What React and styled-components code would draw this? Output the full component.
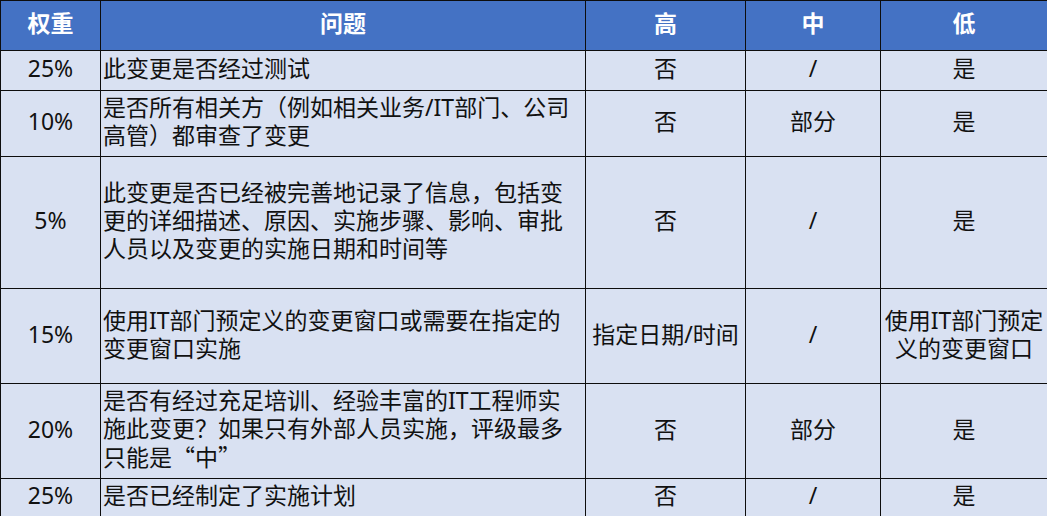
import React from "react";
import styled, { createGlobalStyle } from "styled-components";

const GlobalStyle = createGlobalStyle`
  html, body {
    margin: 0;
    padding: 0;
    background: #ffffff;
  }
  body {
    font-family: "Noto Sans", "Noto Sans CJK SC", sans-serif;
  }
`;

const Table = styled.table`
  width: 1047px;
  table-layout: fixed;
  border-collapse: collapse;
  font-family: "Noto Sans", "Noto Sans CJK SC", sans-serif;
  font-size: 23px;
  line-height: 28px;
  color: #111111;
`;

const Col = styled.col`
  width: ${(p) => p.$w}px;
`;

const HeadRow = styled.tr`
  height: 50px;
  background: #4472c4;
`;

const HeadCell = styled.th`
  border: 1px solid #0d0d0d;
  color: #ffffff;
  font-weight: 700;
  text-align: center;
  padding: 0 0 5px;
`;

const Row = styled.tr`
  height: ${(p) => p.$h}px;
  background: #d9e1f2;
`;

const Cell = styled.td`
  border: 1px solid #0d0d0d;
  padding: ${(p) => (p.$left ? "0 12px 5px 2px" : "0 2px 5px")};
  text-align: ${(p) => (p.$left ? "left" : "center")};
  vertical-align: middle;
  overflow: hidden;
`;

const Quote = styled.span`
  font-family: "Noto Sans CJK SC", sans-serif;
`;

const columns = [
  { key: "w", label: "权重", width: 100 },
  { key: "q", label: "问题", width: 485 },
  { key: "h", label: "高", width: 160 },
  { key: "m", label: "中", width: 135 },
  { key: "l", label: "低", width: 167 },
];

const rows = [
  { h: 40, w: "25%", q: "此变更是否经过测试", hi: "否", mid: "/", lo: "是" },
  {
    h: 66,
    w: "10%",
    q: "是否所有相关方（例如相关业务/IT部门、公司高管）都审查了变更",
    hi: "否",
    mid: "部分",
    lo: "是",
  },
  {
    h: 132,
    w: "5%",
    q: "此变更是否已经被完善地记录了信息，包括变更的详细描述、原因、实施步骤、影响、审批人员以及变更的实施日期和时间等",
    hi: "否",
    mid: "/",
    lo: "是",
  },
  {
    h: 95,
    w: "15%",
    q: "使用IT部门预定义的变更窗口或需要在指定的变更窗口实施",
    hi: "指定日期/时间",
    mid: "/",
    lo: (
      <>
        使用IT部门预定
        <br />
        义的变更窗口
      </>
    ),
  },
  {
    h: 95,
    w: "20%",
    q: (
      <>
        是否有经过充足培训、经验丰富的IT工程师实施此变更？如果只有外部人员实施，评级最多只能是
        <Quote>“中”</Quote>
      </>
    ),
    hi: "否",
    mid: "部分",
    lo: "是",
  },
  { h: 38, w: "25%", q: "是否已经制定了实施计划", hi: "否", mid: "/", lo: "是" },
];

export default function App() {
  return (
    <>
      <GlobalStyle />
      <Table>
        <colgroup>
          {columns.map((c) => (
            <Col key={c.key} $w={c.width} />
          ))}
        </colgroup>
        <thead>
          <HeadRow>
            {columns.map((c) => (
              <HeadCell key={c.key}>{c.label}</HeadCell>
            ))}
          </HeadRow>
        </thead>
        <tbody>
          {rows.map((r, i) => (
            <Row key={i} $h={r.h}>
              <Cell>{r.w}</Cell>
              <Cell $left>{r.q}</Cell>
              <Cell>{r.hi}</Cell>
              <Cell>{r.mid}</Cell>
              <Cell>{r.lo}</Cell>
            </Row>
          ))}
        </tbody>
      </Table>
    </>
  );
}
